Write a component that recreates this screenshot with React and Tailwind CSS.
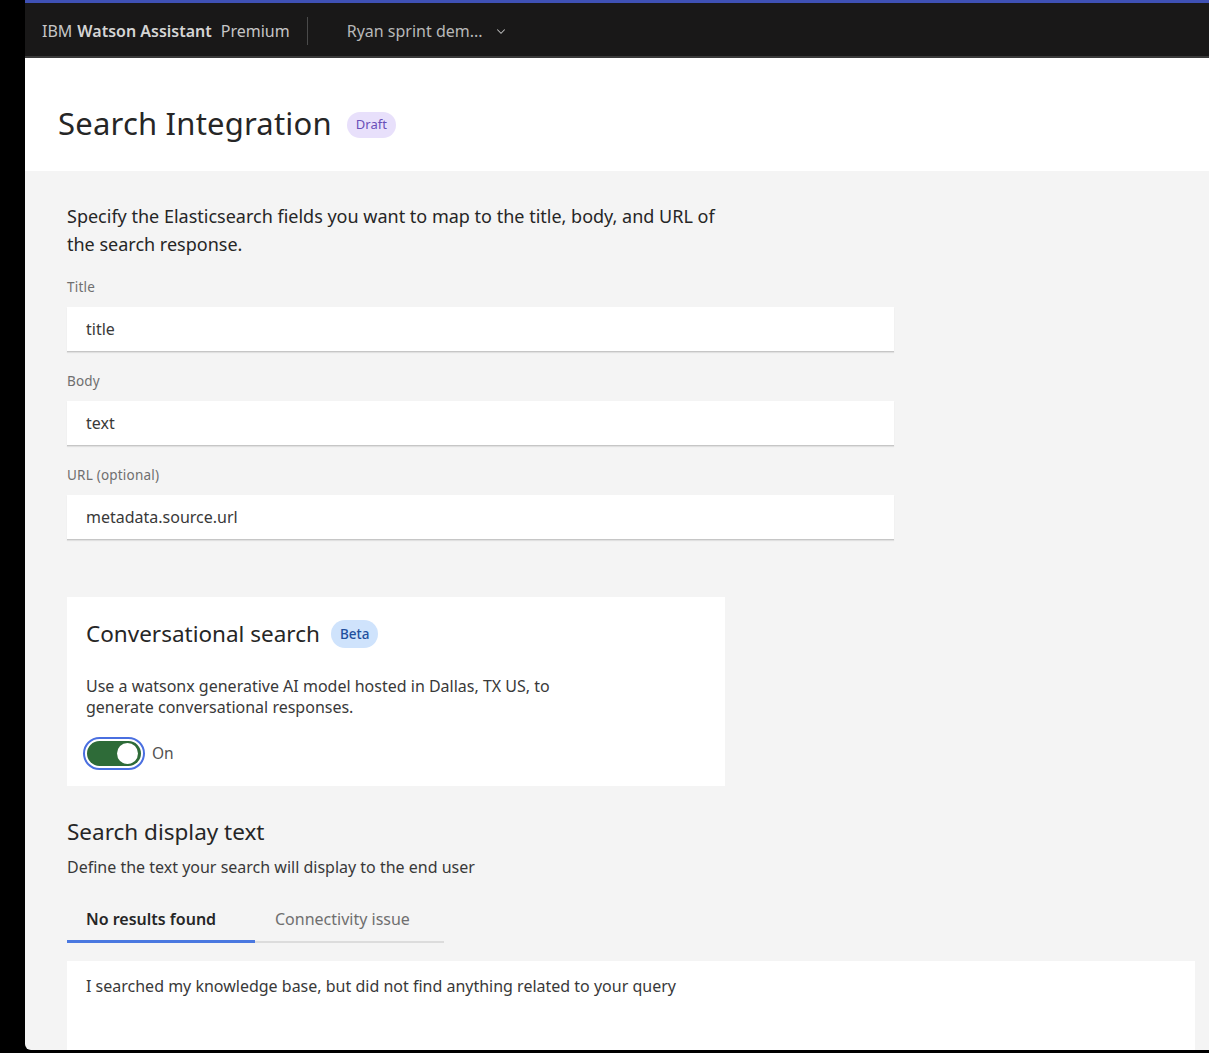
import React from 'react';

const font = { fontFamily: '"Noto Sans", "Open Sans", sans-serif' };

function Field({ label, value }) {
  return (
    <div className="flex flex-col">
      <label className="text-[13.5px] text-[#6f6f6f] leading-[18px] mb-[11px] tracking-[0.2px]">{label}</label>
      <div className="w-[827px] h-[45px] bg-white border-b border-[#c6c6c6] shadow-[0_1px_1px_rgba(0,0,0,0.08)] flex items-center px-[19px] text-[16px] text-[#393939]">
        {value}
      </div>
    </div>
  );
}

export default function App() {
  return (
    <div className="w-[1209px] h-[1053px] bg-black flex overflow-hidden" style={font}>
      <div className="w-[25px] flex-shrink-0 bg-black" />
      <div className="flex-1 flex flex-col bg-[#f4f4f4] rounded-bl-[6px] overflow-hidden mb-[3px]">
        {/* Top bar */}
        <div className="h-[3px] bg-[#3f51b5] flex-shrink-0" />
        <div className="h-[55px] bg-[#191818] border-b-[2px] border-[#3a3a3a] flex items-center pl-[17px] pt-[2px] flex-shrink-0 text-[16px] text-[#c6c6c6]">
          <span>IBM</span>
          <span className="font-semibold ml-[5px] text-[#d4d4d4]">Watson Assistant</span>
          <span className="ml-[9px]">Premium</span>
          <div className="w-px h-[28px] bg-[#4a4a4a] ml-[17px]" />
          <span className="ml-[39px] text-[#b8b8b8]">Ryan sprint dem...</span>
          <svg className="ml-[12px]" width="12" height="12" viewBox="0 0 16 16" fill="none">
            <path d="M3 6l5 5 5-5" stroke="#bdbdbd" strokeWidth="1.4" />
          </svg>
        </div>

        {/* Page header */}
        <div className="h-[113px] bg-white flex items-center pl-[33px] pt-[18px] flex-shrink-0">
          <h1 className="text-[31px] text-[#262626] font-normal tracking-[0.2px]">Search Integration</h1>
          <span className="ml-[15px] mt-[3px] h-[26px] px-[9px] rounded-full bg-[#e8e0fb] text-[#6a4fb8] text-[13px] flex items-center">Draft</span>
        </div>

        {/* Body */}
        <div className="flex-1 pl-[42px] pt-[31px] flex flex-col">
          <p className="text-[18px] leading-[28px] text-[#262626] w-[670px]">
            Specify the Elasticsearch fields you want to map to the title, body, and URL of the search response.
          </p>

          <div className="mt-[20px] flex flex-col gap-[20px]">
            <Field label="Title" value="title" />
            <Field label="Body" value="text" />
            <Field label="URL (optional)" value="metadata.source.url" />
          </div>

          {/* Conversational search card */}
          <div className="mt-[57px] w-[658px] h-[189px] bg-white pl-[19px] pt-[20px] flex flex-col">
            <div className="flex items-center">
              <span className="text-[22.5px] text-[#262626]">Conversational search</span>
              <span className="ml-[11px] h-[28px] px-[9px] rounded-full bg-[#cfe3fc] text-[#1f4f9e] text-[13.5px] font-medium flex items-center">Beta</span>
            </div>
            <p className="mt-[25px] text-[16px] leading-[21px] text-[#393939] w-[490px]">
              Use a watsonx generative AI model hosted in Dallas, TX US, to generate conversational responses.
            </p>
            <div className="mt-[19px] flex items-center -ml-[3px]">
              <div className="w-[62px] h-[33px] rounded-full border-[2px] border-[#4a6fe0] p-[2px] flex">
                <div className="flex-1 rounded-full bg-[#2e6b38] flex items-center justify-end pr-[3px]">
                  <div className="w-[21px] h-[21px] rounded-full bg-white" />
                </div>
              </div>
              <span className="ml-[7px] text-[15.5px] text-[#525252]">On</span>
            </div>
          </div>

          {/* Search display text */}
          <h2 className="mt-[29px] text-[22.5px] text-[#262626] font-normal">Search display text</h2>
          <p className="mt-[6px] text-[16px] text-[#393939]">Define the text your search will display to the end user</p>

          <div className="mt-[19px] flex">
            <div className="w-[188px] h-[45px] border-b-[3px] border-[#4a78e0] flex items-center pl-[19px] text-[16px] font-semibold text-[#262626]">
              No results found
            </div>
            <div className="w-[189px] h-[45px] border-b-[2px] border-[#dcdcdc] flex items-center pl-[20px] text-[16px] text-[#6f6f6f]">
              Connectivity issue
            </div>
          </div>

          <div className="mt-[18px] w-[1128px] flex-1 bg-white pl-[19px] pt-[13px] text-[16px] text-[#393939]">
            I searched my knowledge base, but did not find anything related to your query
          </div>
        </div>
      </div>
    </div>
  );
}
